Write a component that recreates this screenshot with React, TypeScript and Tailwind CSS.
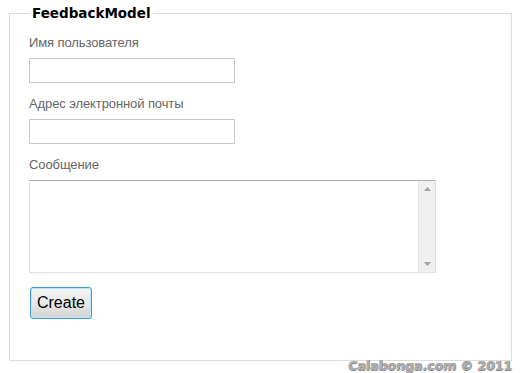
import React from 'react';

const labelCls = "block text-[13px] leading-5 tracking-[-0.1px] text-[#666]";
const inputCls = "block w-[206px] h-[25px] border border-[#c8c8c8] bg-white outline-none px-1 text-[14px]";

function Field({ label, children, first }: { label: string; children: React.ReactNode; first?: boolean }) {
  return (
    <div className={first ? '' : 'mt-[11px]'}>
      <label className={labelCls}>{label}</label>
      <div className="mt-[5px]">{children}</div>
    </div>
  );
}

export default function App() {
  return (
    <div className="relative w-[526px] h-[373px] bg-white pl-[9px] pt-[3px] font-['Liberation_Sans',Arial,sans-serif]">
      <fieldset className="w-[503px] border border-[#dcdcdc] pl-[19px] pr-4 pt-[10px] pb-[41px]">
        <legend className="ml-px px-[2px] text-[13.5px] font-bold text-black font-['DejaVu_Sans',sans-serif]">
          FeedbackModel
        </legend>

        <Field label="Имя пользователя" first>
          <input type="text" className={inputCls} />
        </Field>

        <Field label="Адрес электронной почты">
          <input type="text" className={inputCls} />
        </Field>

        <Field label="Сообщение">
          <div className="flex w-[407px] h-[93px] border border-[#dbdfe6] border-t-[#abadb3] bg-white">
            <textarea className="flex-1 resize-none outline-none p-1 text-[14px]" />
            <div className="flex w-[17px] flex-col items-center justify-between border-l border-[#e6e6e6] bg-[#f0f0f0] py-[6px]">
              <svg width="7" height="4" viewBox="0 0 7 4"><path d="M3.5 0L7 4H0z" fill="#a3a3a3" /></svg>
              <svg width="7" height="4" viewBox="0 0 7 4"><path d="M0 0h7L3.5 4z" fill="#a3a3a3" /></svg>
            </div>
          </div>
        </Field>

        <button
          type="button"
          className="mt-[14px] ml-px flex h-8 w-[62px] items-center justify-center rounded-[3px] border border-[#3c9bd6] bg-gradient-to-b from-[#f4f4f4] via-[#e8e8e8] to-[#d2d2d2] text-[16px] text-black shadow-[inset_0_0_0_1px_#bfe6f9]"
        >
          Create
        </button>
      </fieldset>

      <div className="absolute right-[14px] top-[357px] text-[12.5px] font-bold text-[#b0b0b0] font-['DejaVu_Sans',sans-serif] [text-shadow:0_1px_0_#888,1px_0_0_#999]">
        Calabonga.com © 2011
      </div>
    </div>
  );
}
